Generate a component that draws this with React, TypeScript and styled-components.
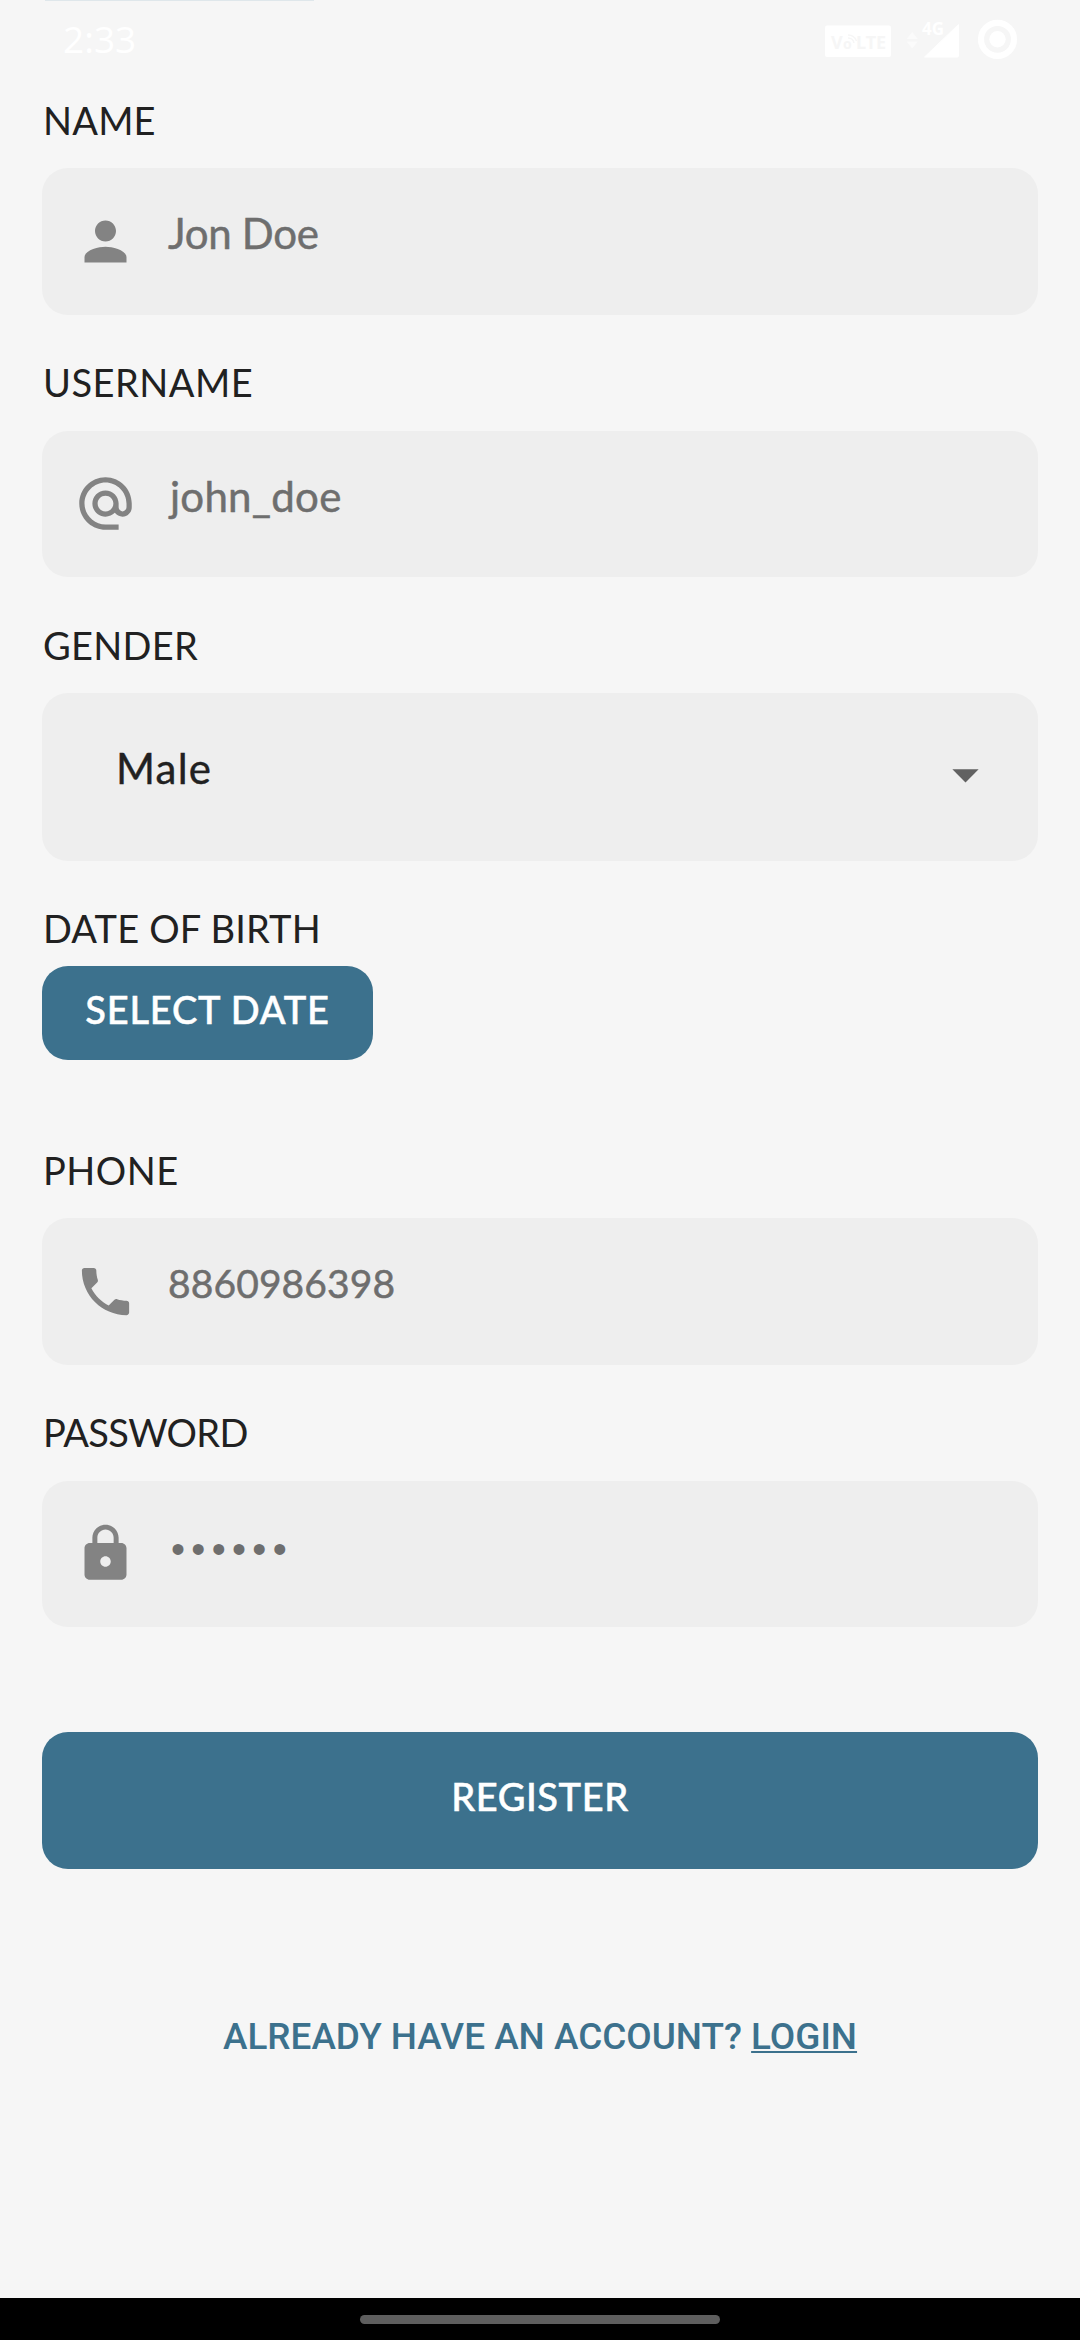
import React from "react";
import styled, { createGlobalStyle } from "styled-components";
import { MdAlternateEmail, MdArrowDropDown, MdLock, MdPerson, MdPhone } from "react-icons/md";

const accent = "#3c718d";
const background = "#f6f6f6";
const ink = "#212121";

const GlobalStyle = createGlobalStyle`
  * { box-sizing: border-box; }
  body { margin: 0; background: ${background}; }
`;

const Screen = styled.main`
  position: relative;
  display: flex;
  flex-direction: column;
  width: 1080px;
  height: 2340px;
  overflow: hidden;
  background: ${background};
  font-family: Lato, "Liberation Sans", sans-serif;
`;

const ScrolledHeading = styled.div`
  width: 269px;
  height: 1px;
  margin-left: 45px;
  background: #dfe7eb;
`;

const StatusBar = styled.header`
  position: absolute;
  inset: 0 0 auto 0;
  display: flex;
  align-items: flex-start;
  justify-content: space-between;
  height: 80px;
  padding: 0 62px 0 63px;
  color: #fff;
`;

const Clock = styled.time`
  padding-top: 14px;
  font: 400 37px/50px "Open Sans", "Noto Sans", sans-serif;
`;

const StatusIcons = styled.svg`
  display: block;
  width: 200px;
  height: 80px;
`;

const StatusText = styled.text`
  font-family: "Noto Sans", "Open Sans", sans-serif;
  font-weight: 700;
`;

const Form = styled.form`
  display: flex;
  flex: 1;
  flex-direction: column;
  align-items: stretch;
  padding: 95.5px 42px 0;
`;

const Field = styled.div<{ $after: number }>`
  display: flex;
  flex-direction: column;
  align-items: flex-start;
  margin-bottom: ${(p) => p.$after}px;
`;

const Label = styled.label<{ $tracking: number; $gap?: number }>`
  margin-bottom: ${(p) => p.$gap ?? 25.5}px;
  padding-left: 1px;
  color: ${ink};
  font-size: 38px;
  line-height: 46px;
  letter-spacing: ${(p) => p.$tracking}px;
`;

const InputBox = styled.div`
  display: flex;
  align-items: center;
  width: 100%;
  height: 146.6px;
  padding-left: 31.5px;
  border-radius: 26px;
  background: #eeeeee;
  color: #838383;

  svg {
    flex: none;
    width: 63px;
    height: 63px;
  }
`;

const Value = styled.span<{ $tracking: number; $size?: number; $indent?: number }>`
  margin: 0 0 16px ${(p) => 31.5 + (p.$indent ?? 0)}px;
  color: #6e6e6e;
  font-size: ${(p) => p.$size ?? 42}px;
  line-height: 50px;
  letter-spacing: ${(p) => p.$tracking}px;
  -webkit-text-stroke: 0.5px #6e6e6e;
`;

const Dots = styled(Value)`
  margin-bottom: 9px;
  font-family: "Liberation Sans", Arial, sans-serif;
  -webkit-text-stroke: 0;
`;

const SelectBox = styled.div`
  display: flex;
  align-items: flex-start;
  justify-content: space-between;
  width: 100%;
  height: 168px;
  padding: 50px 41px 0 74px;
  border-radius: 26px;
  background: #eeeeee;
  color: ${ink};
  font-size: 42px;
  line-height: 51px;
  letter-spacing: 1.2px;

  svg {
    width: 63px;
    height: 63px;
    color: #616161;
  }
`;

const SelectedOption = styled.span`
  -webkit-text-stroke: 0.4px ${ink};
`;

const Button = styled.button<{ $tracking: number }>`
  border: 0;
  border-radius: 26px;
  background: ${accent};
  color: #fff;
  font: 500 38px/46px Lato, "Liberation Sans", sans-serif;
  letter-spacing: ${(p) => p.$tracking}px;
  -webkit-text-stroke: 0.5px #fff;
`;

const DateButton = styled(Button)`
  width: 331px;
  height: 94.5px;
  padding: 0 0 9px;
`;

const RegisterButton = styled(Button)`
  width: 100%;
  height: 137px;
  padding: 0 0 10px;
`;

const LoginPrompt = styled.p`
  margin: 145px 0 0;
  color: ${accent};
  text-align: center;
  white-space: nowrap;
  font: 500 36.9px/46px Roboto, "Liberation Sans", sans-serif;
`;

const LoginLink = styled.a`
  text-decoration: underline;
  text-decoration-thickness: 2px;
  text-underline-offset: 2px;
  text-decoration-skip-ink: none;
`;

const NavigationBar = styled.footer`
  display: flex;
  justify-content: center;
  flex: none;
  height: 42px;
  padding-top: 17px;
  background: #000;
`;

const Handle = styled.div`
  width: 360px;
  height: 9px;
  border-radius: 5px;
  background: #5e5e5e;
`;

export default function App() {
  return (
    <Screen>
      <GlobalStyle />
      <ScrolledHeading />
      <Form>
        <Field $after={44.5}>
          <Label $tracking={0.2}>NAME</Label>
          <InputBox>
            <MdPerson />
            <Value $tracking={-0.3}>Jon Doe</Value>
          </InputBox>
        </Field>
        <Field $after={44.5}>
          <Label $tracking={0.5}>USERNAME</Label>
          <InputBox>
            <MdAlternateEmail />
            <Value $tracking={0.25} $indent={2}>john_doe</Value>
          </InputBox>
        </Field>
        <Field $after={43.7}>
          <Label $tracking={0.3}>GENDER</Label>
          <SelectBox>
            <SelectedOption>Male</SelectedOption>
            <MdArrowDropDown />
          </SelectBox>
        </Field>
        <Field $after={86.2}>
          <Label $tracking={0.17} $gap={15.1}>DATE OF BIRTH</Label>
          <DateButton type="button" $tracking={0.8}>SELECT DATE</DateButton>
        </Field>
        <Field $after={44.3}>
          <Label $tracking={0.5}>PHONE</Label>
          <InputBox>
            <MdPhone />
            <Value $tracking={0.1} $size={39}>8860986398</Value>
          </InputBox>
        </Field>
        <Field $after={105.2}>
          <Label $tracking={-0.65}>PASSWORD</Label>
          <InputBox>
            <MdLock />
            <Dots $tracking={6.33} $size={40} $indent={3}>••••••</Dots>
          </InputBox>
        </Field>
        <RegisterButton type="button" $tracking={0.6}>REGISTER</RegisterButton>
        <LoginPrompt>
          ALREADY HAVE AN ACCOUNT? <LoginLink>LOGIN</LoginLink>
        </LoginPrompt>
      </Form>
      <NavigationBar>
        <Handle />
      </NavigationBar>
      <StatusBar>
        <Clock>2:33</Clock>
        <StatusIcons viewBox="818 0 200 80" fill="#fff">
          <rect x="825" y="25.5" width="66" height="31.5" rx="2" />
          <StatusText x="831" y="49" fontSize="18" fill={background}>V</StatusText>
          <StatusText x="843" y="49" fontSize="14" fill={background}>o</StatusText>
          <StatusText x="856" y="49" fontSize="18" fill={background}>LTE</StatusText>
          <path d="M848 38a6 6 0 0 1 6 5M848 35a9 9 0 0 1 8.500 6" fill="none" stroke={background} strokeWidth="1.500" />
          <path d="M906.500 39l5.700-7 5.700 7zM906.500 41.500l5.700 7 5.700-7z" opacity=".5" />
          <path d="M958.500 24.500V56a1 1 0 0 1-1 1H924.500z" stroke="#fff" strokeLinejoin="round" />
          <StatusText x="922" y="35" fontSize="17">4G</StatusText>
          <circle cx="997.500" cy="39.300" r="16.500" fill="none" stroke="#fff" strokeWidth="6.200" />
          <circle cx="997.500" cy="39.300" r="8.200" />
        </StatusIcons>
      </StatusBar>
    </Screen>
  );
}
